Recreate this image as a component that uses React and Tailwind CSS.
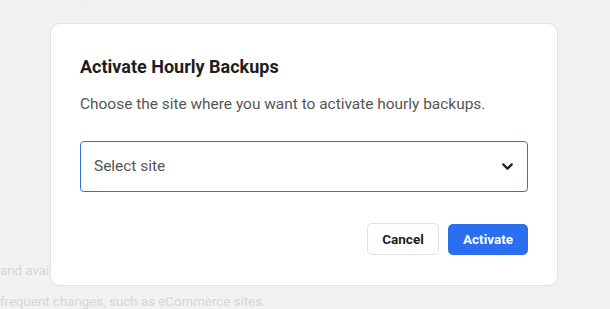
import { ChevronDown } from 'lucide-react';

export default function App() {
  return (
    <div className="relative w-[610px] h-[309px] overflow-hidden bg-[#f2f2f2] font-['Roboto',sans-serif]">
      {/* faded page behind the modal */}
      <div className="ml-[82px] w-[91px] h-[7px] rounded-b bg-[#f0f0f0]" />
      <div className="mt-[248px] text-[13.3px] leading-[31px] text-[#d6d6d6] whitespace-nowrap">
        <p>and available for 24 hours. Hourly backups are particularly useful for websites with very</p>
        <p>frequent changes, such as eCommerce sites.</p>
      </div>

      {/* modal */}
      <div className="absolute left-[50px] top-[23px] w-[508px] h-[263px] rounded-[10px] border border-[#e3e3e3] bg-white px-[29px] pt-[29px]">
        <h2 className="text-[18px] leading-[28px] font-bold text-[#1e1e1e]">Activate Hourly Backups</h2>
        <p className="mt-[12px] text-[15.45px] leading-[22px] text-[#555]">
          Choose the site where you want to activate hourly backups.
        </p>
        <button
          type="button"
          className="mt-[26px] flex items-center justify-between w-full h-[51px] rounded-[4px] border border-[#2f6fe4] px-[13px] text-left"
        >
          <span className="text-[15.45px] text-[#555]">Select site</span>
          <ChevronDown size={17} strokeWidth={3} className="text-[#1e1e1e] mr-[-2px]" />
        </button>
        <div className="mt-[31px] flex justify-end gap-[9px]">
          <button type="button" className="h-[32px] w-[72px] rounded-[5px] border border-[#e0e0e0] bg-white text-[13.5px] font-bold text-[#1e1e1e]">
            Cancel
          </button>
          <button type="button" className="h-[31px] mt-[1px] w-[80px] rounded-[5px] bg-[#2b6eef] text-[13.5px] font-bold text-white">
            Activate
          </button>
        </div>
      </div>
    </div>
  );
}
